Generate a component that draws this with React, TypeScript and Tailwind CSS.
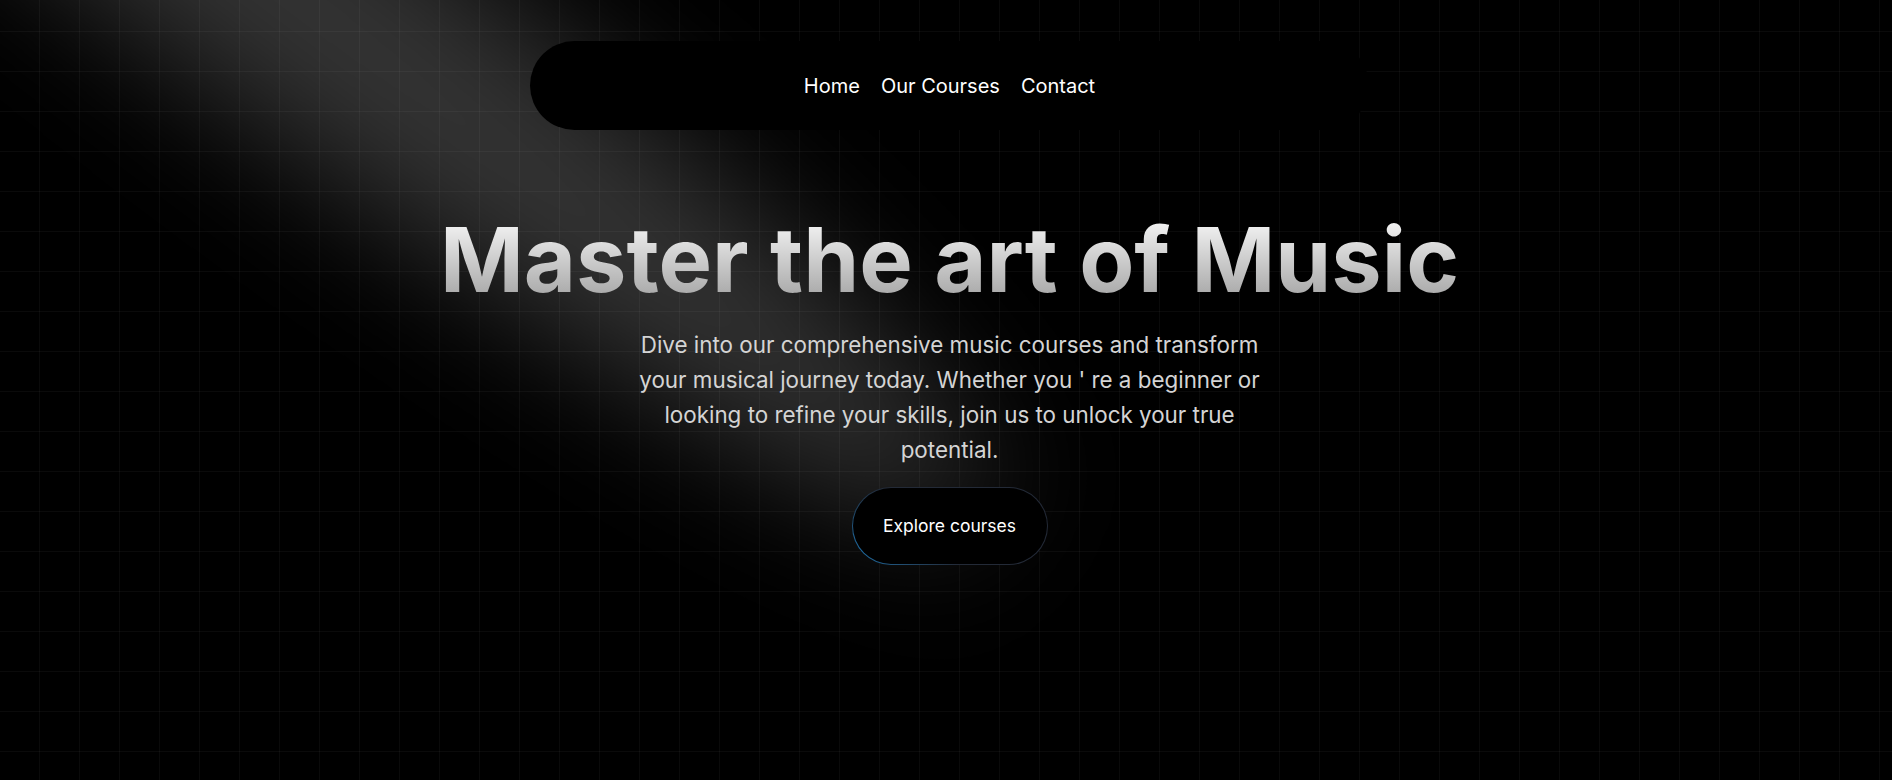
import React from "react";

function Spotlight() {
  return (
    <svg
      className="pointer-events-none absolute left-0 top-0 z-[1] h-full w-full"
      viewBox="0 0 1892 780"
      preserveAspectRatio="none"
      fill="none"
    >
      <defs>
        <filter
          id="spot-blur"
          x="-2000"
          y="-2000"
          width="6000"
          height="5000"
          filterUnits="userSpaceOnUse"
          colorInterpolationFilters="sRGB"
        >
          <feGaussianBlur stdDeviation="66" />
        </filter>
      </defs>
      <ellipse
        cx="0"
        cy="0"
        rx="860"
        ry="125"
        transform="translate(300 0) rotate(37)"
        fill="white"
        fillOpacity="0.2"
        filter="url(#spot-blur)"
      />
    </svg>
  );
}

export default function App() {
  return (
    <div
      className="relative min-h-[780px] w-full overflow-hidden bg-black bg-[linear-gradient(to_right,rgba(255,255,255,0.04)_1px,transparent_1px),linear-gradient(to_bottom,rgba(255,255,255,0.04)_1px,transparent_1px)] bg-[size:40px_40px] bg-[position:39px_31px]"
      style={{ fontFamily: "Inter, 'Noto Sans', sans-serif" }}
    >
      <Spotlight />
      <div className="relative z-10 flex flex-col items-center">
        <nav className="ml-[7px] mt-[41px] flex h-[89px] w-[839px] items-center justify-center gap-[21px] rounded-full bg-black text-xl text-white">
          <a href="#">Home</a>
          <a href="#">Our Courses</a>
          <a href="#">Contact</a>
        </nav>
        <h1 className="ml-[7px] mt-[85px] bg-linear-to-b from-neutral-50 to-neutral-400 bg-clip-text text-[90px] font-bold leading-[90px] text-transparent">
          Master the art of Music
        </h1>
        <p className="ml-[7px] mt-[22px] max-w-[640px] text-center text-[22.4px] leading-[35px] text-neutral-300">
          Dive into our comprehensive music courses and transform your musical journey today. Whether you ' re a beginner or looking to refine your skills, join us to unlock your true potential.
        </p>
        <div className="ml-[7px] mt-[20px] rounded-full bg-[radial-gradient(55%_90%_at_0%_85%,#1f6fa8_0%,rgba(30,41,59,0)_100%),linear-gradient(#232a37,#232a37)] p-px">
          <button className="flex h-[76px] w-[194px] items-center justify-center rounded-full bg-black text-[17.5px] text-white">
            Explore courses
          </button>
        </div>
      </div>
    </div>
  );
}
